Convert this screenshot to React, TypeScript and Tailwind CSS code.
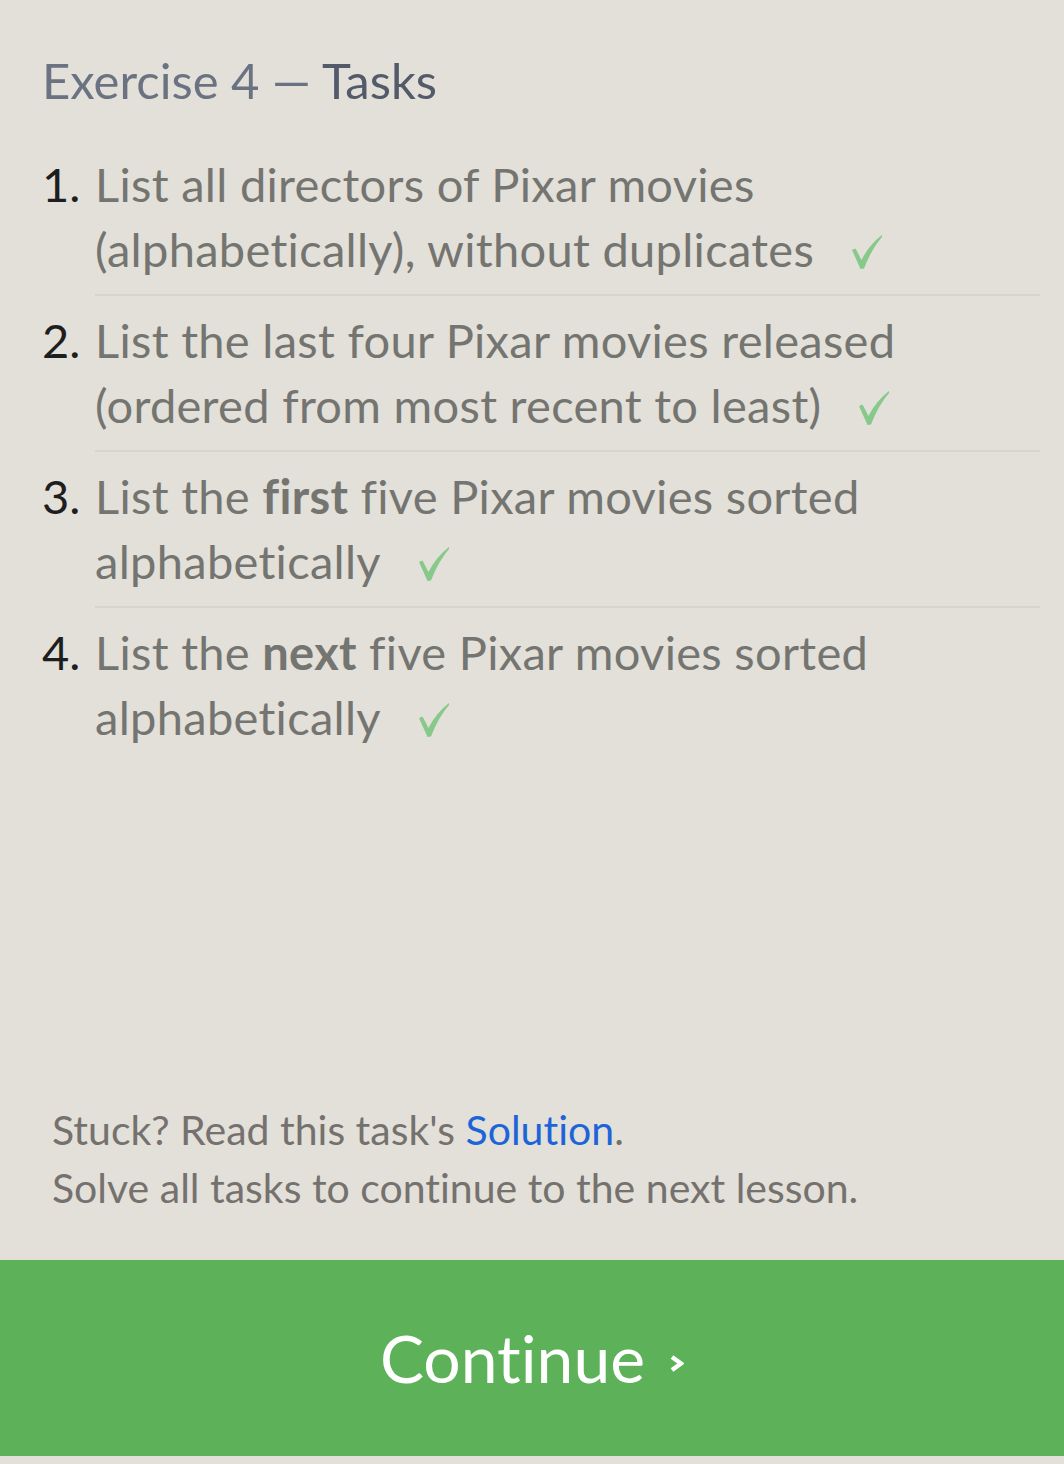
import type { ReactNode } from 'react';

const tasks: { id: number; text: ReactNode }[] = [
  {
    id: 1,
    text: (
      <>
        List all directors of Pixar movies
        <br />
        (alphabetically), without duplicates
      </>
    ),
  },
  {
    id: 2,
    text: (
      <>
        List the last four Pixar movies released
        <br />
        (ordered from most recent to least)
      </>
    ),
  },
  {
    id: 3,
    text: (
      <>
        List the <b className="font-bold">first</b> five Pixar movies sorted
        <br />
        alphabetically
      </>
    ),
  },
  {
    id: 4,
    text: (
      <>
        List the <b className="font-bold">next</b> five Pixar movies sorted
        <br />
        alphabetically
      </>
    ),
  },
];

function Check() {
  return (
    <svg viewBox="0 0 30 34" className="inline-block ml-[38px] h-[34px] w-[30px] align-[-2px]">
      <path d="M0 15 L3.5 13.5 L9.5 25 Q17 10 30 0 L30 2 Q19.5 14 12 33.5 L8.5 34 Z" fill="#86c98a" />
    </svg>
  );
}

export default function App() {
  return (
    <div className="h-[1464px] bg-[#e2e0d8] flex flex-col font-['Lato','Open_Sans',sans-serif] [font-variant-ligatures:none]">
      <div className="pl-[42px] pr-[24px] pt-[50px]">
        <h2 className="text-[49px] leading-[60px] text-[#6b7383]">
          Exercise 4 — <span className="text-[#535b6b]">Tasks</span>
        </h2>

        <ol className="mt-[30px]">
          {tasks.map((t, i) => (
            <li key={t.id} className="flex">
              <span className="w-[53px] shrink-0 pt-3 text-[47px] leading-[65px] text-[#1e1e1e]">{t.id}.</span>
              <div
                className={
                  i < tasks.length - 1
                    ? 'flex-1 py-3 text-[47px] leading-[65px] tracking-[0.3px] text-[#747471] border-b-2 border-[#d8d5ca]'
                    : 'flex-1 py-3 text-[47px] leading-[65px] tracking-[0.3px] text-[#747471]'
                }
              >
                {t.text}
                <Check />
              </div>
            </li>
          ))}
        </ol>
      </div>

      <div className="flex-1" />

      <div className="px-[52px] text-[41px] leading-[58px] text-[#75716f]">
        <p>
          Stuck? Read this task's <a className="text-[#1d64d8]">Solution</a>.
        </p>
        <p>Solve all tasks to continue to the next lesson.</p>
      </div>

      <div className="mt-[43px] h-[196px] bg-[#5db259] flex items-center justify-center text-white">
        <span className="text-[66px] leading-none">Continue</span>
        <svg viewBox="0 0 15 17" className="ml-[24px] mt-[10px] h-[17px] w-[15px]">
          <path d="M3 2 L12 8.5 L3 15" fill="none" stroke="#fff" strokeWidth="4.5" strokeLinejoin="miter" />
        </svg>
      </div>
      <div className="h-[8px]" />
    </div>
  );
}
